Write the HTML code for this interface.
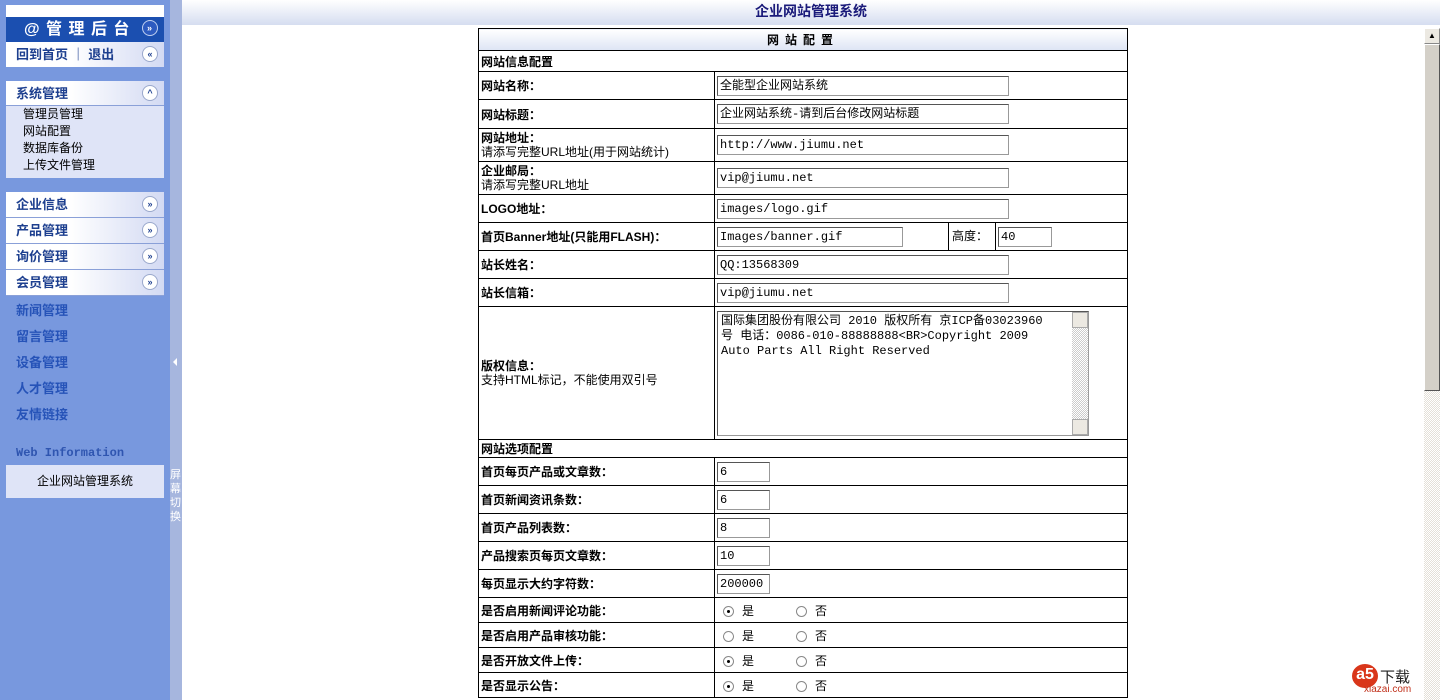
<!DOCTYPE html>
<html><head><meta charset="utf-8"><style>
*{margin:0;padding:0;box-sizing:border-box}
html{overflow:hidden;width:1440px;height:700px}
body{width:1440px;height:700px;overflow:hidden;background:#fff;font-family:"Liberation Sans","Noto Sans CJK SC","WenQuanYi Zen Hei",sans-serif;font-size:12px;position:relative}
.side{position:absolute;left:0;top:0;width:170px;height:700px;background:#7898de}
.strip{position:absolute;left:170px;top:0;width:12px;height:700px;background:#a6b6de}
.abs{position:absolute}
.box{position:absolute;left:6px;width:158px}
.hd{height:25px;background:linear-gradient(90deg,#fff 40%,#d3daf3);color:#1d3f8f;font-weight:bold;font-size:13px;line-height:25px;padding-left:10px;border-bottom:1px solid #8aa0d8}
.ic{position:absolute;right:6px;top:4px;width:16px;height:16px;border-radius:50%;background:#fff;border:1px solid #9aa8cc;color:#1d3f8f;font-size:9px;line-height:14px;text-align:center;font-weight:bold}
.lk{position:absolute;left:16px;color:#2653b8;font-weight:bold;font-size:13px}
.top{position:absolute;left:182px;top:0;width:1258px;height:25px;background:linear-gradient(#fff,#d5ddf0);text-align:center;color:#1a1a7a;font-weight:bold;font-size:14px;line-height:23px}
table{position:absolute;left:478px;top:28px;width:650px;border-collapse:collapse}
td{border:1px solid #000;padding:0 2px;font-size:12px;vertical-align:middle}
td.l{width:236px;font-weight:bold}
td.l span{font-weight:normal}
.in{display:inline-block;border:1px solid #999;border-top-color:#555;border-left-color:#555;height:20px;line-height:18px;padding-left:2px;font-family:"Liberation Mono","Noto Sans CJK SC",monospace;font-size:12px;vertical-align:middle}
.r{display:inline-block;width:11px;height:11px;border-radius:50%;border:1px solid #888;background:#fff;vertical-align:middle;position:relative;margin:0 8px 0 6px}
.r.on::after{content:"";position:absolute;left:3px;top:3px;width:3px;height:3px;border-radius:50%;background:#000}
.sp{display:inline-block;width:36px}
.sb{position:absolute;left:1424px;top:28px;width:16px;height:672px;background:repeating-conic-gradient(#e4e0d8 0 25%,#fff 0 50%) 0 0/2px 2px}
</style></head><body>
<div class="side"></div>
<div class="strip"><div class="abs" style="left:3px;top:358px;width:0;height:0;border:4px solid transparent;border-right-color:#fff;border-left:0"></div>
<div class="abs" style="left:0;top:468px;width:12px;color:#fff;font-size:11px;line-height:14px">屏幕切换</div></div>
<div class="abs" style="left:6px;top:5px;width:158px;height:12px;background:#fff"></div>
<div class="abs" style="left:6px;top:17px;width:158px;height:25px;background:#1b4fb0;color:#fff;font-weight:bold;font-size:16px;line-height:25px;padding-left:18px;letter-spacing:1px">@ 管 理 后 台<div class="ic" style="top:3px;background:#2d5bc0;border-color:#c0d0f0;color:#fff">»</div></div>
<div class="abs" style="left:6px;top:42px;width:158px;height:25px;background:linear-gradient(90deg,#fff 40%,#d3daf3);color:#1d3f8f;font-weight:bold;font-size:13px;line-height:25px;padding-left:10px">回到首页 ｜ 退出<div class="ic">«</div></div>
<div class="box" style="top:81px;height:97px;background:#dfe4f7"><div class="hd">系统管理<div class="ic">^</div></div>
<div style="padding-left:17px;line-height:17px;font-size:12px;color:#000">管理员管理<br>网站配置<br>数据库备份<br>上传文件管理</div></div>
<div class="box hd" style="top:192px;height:26px">企业信息<div class="ic">»</div></div>
<div class="box hd" style="top:218px;height:26px">产品管理<div class="ic">»</div></div>
<div class="box hd" style="top:244px;height:26px">询价管理<div class="ic">»</div></div>
<div class="box hd" style="top:270px;height:26px">会员管理<div class="ic">»</div></div>
<div class="lk" style="top:300px">新闻管理</div>
<div class="lk" style="top:326px">留言管理</div>
<div class="lk" style="top:352px">设备管理</div>
<div class="lk" style="top:378px">人才管理</div>
<div class="lk" style="top:404px">友情链接</div>
<div class="lk" style="top:446px;font-family:'Liberation Mono',monospace;font-size:12px;color:#2f55b0">Web Information</div>
<div class="abs" style="left:6px;top:465px;width:158px;height:33px;background:#dfe4f7;text-align:center;line-height:33px;font-size:12px">企业网站管理系统</div>
<div class="top">企业网站管理系统</div>
<table>
<tr style="height:22px"><td colspan="2" style="text-align:center;font-weight:bold;letter-spacing:6px;background:linear-gradient(#fff,#dde4f4)">网站配置</td></tr>
<tr style="height:21px"><td colspan="2" style="font-weight:bold">网站信息配置</td></tr>
<tr style="height:28px"><td class="l">网站名称：</td><td><span class="in" style="width:292px">全能型企业网站系统</span></td></tr>
<tr style="height:29px"><td class="l">网站标题：</td><td><span class="in" style="width:292px">企业网站系统-请到后台修改网站标题</span></td></tr>
<tr style="height:33px"><td class="l" style="line-height:14px">网站地址：<br><span>请添写完整URL地址(用于网站统计)</span></td><td><span class="in" style="width:292px">http://www.jiumu.net</span></td></tr>
<tr style="height:33px"><td class="l" style="line-height:14px">企业邮局：<br><span>请添写完整URL地址</span></td><td><span class="in" style="width:292px">vip@jiumu.net</span></td></tr>
<tr style="height:28px"><td class="l">LOGO地址：</td><td><span class="in" style="width:292px">images/logo.gif</span></td></tr>
<tr style="height:28px"><td class="l">首页Banner地址(只能用FLASH)：</td><td style="padding:0"><div style="display:flex;height:27px;align-items:center"><div style="width:233px;padding-left:2px"><span class="in" style="width:186px">Images/banner.gif</span></div><div style="width:48px;border-left:1px solid #000;border-right:1px solid #000;height:27px;line-height:26px;padding-left:3px">高度：</div><div style="padding-left:2px"><span class="in" style="width:54px">40</span></div></div></td></tr>
<tr style="height:28px"><td class="l">站长姓名：</td><td><span class="in" style="width:292px">QQ:13568309</span></td></tr>
<tr style="height:28px"><td class="l">站长信箱：</td><td><span class="in" style="width:292px">vip@jiumu.net</span></td></tr>
<tr style="height:133px"><td class="l" style="line-height:14px">版权信息：<br><span>支持HTML标记，不能使用双引号</span></td><td><div class="in" style="width:372px;height:125px;line-height:15px;padding:2px 18px 0 3px;position:relative;white-space:pre;overflow:hidden">国际集团股份有限公司 2010 版权所有 京ICP备03023960
号 电话：0086-010-88888888&lt;BR&gt;Copyright 2009
Auto Parts All Right Reserved<div style="position:absolute;right:0;top:0;width:16px;height:123px;background:repeating-conic-gradient(#ccc 0 25%,#fff 0 50%) 0 0/2px 2px"><div style="height:16px;background:#ece9e2;border:1px solid #aaa"></div><div style="position:absolute;bottom:0;width:16px;height:16px;background:#ece9e2;border:1px solid #aaa"></div></div></div></td></tr>
<tr style="height:18px"><td colspan="2" style="font-weight:bold">网站选项配置</td></tr>
<tr style="height:28px"><td class="l">首页每页产品或文章数：</td><td><span class="in" style="width:53px">6</span></td></tr>
<tr style="height:28px"><td class="l">首页新闻资讯条数：</td><td><span class="in" style="width:53px">6</span></td></tr>
<tr style="height:28px"><td class="l">首页产品列表数：</td><td><span class="in" style="width:53px">8</span></td></tr>
<tr style="height:28px"><td class="l">产品搜索页每页文章数：</td><td><span class="in" style="width:53px">10</span></td></tr>
<tr style="height:28px"><td class="l">每页显示大约字符数：</td><td><span class="in" style="width:53px">200000</span></td></tr>
<tr style="height:25px"><td class="l">是否启用新闻评论功能：</td><td><span class="r on"></span>是<span class="sp"></span><span class="r"></span>否</td></tr>
<tr style="height:25px"><td class="l">是否启用产品审核功能：</td><td><span class="r"></span>是<span class="sp"></span><span class="r"></span>否</td></tr>
<tr style="height:25px"><td class="l">是否开放文件上传：</td><td><span class="r on"></span>是<span class="sp"></span><span class="r"></span>否</td></tr>
<tr style="height:25px"><td class="l">是否显示公告：</td><td><span class="r on"></span>是<span class="sp"></span><span class="r"></span>否</td></tr>
</table>
<div class="sb"><div style="height:16px;background:#ece9e2;border:1px solid #888;border-top-color:#fff;border-left-color:#fff;text-align:center;font-size:8px;line-height:13px">▲</div><div style="height:347px;background:#d4d0c8;border:1px solid #555;border-top-color:#fff;border-left-color:#fff"></div></div>
<div class="abs" style="left:1352px;top:664px;width:72px;height:30px"><div class="abs" style="left:0;top:0;width:26px;height:24px;border-radius:50%;background:#d9361a;color:#fff;font-weight:bold;font-size:16px;text-align:center;line-height:22px">a5</div><div class="abs" style="left:28px;top:2px;font-size:15px;color:#222">下载</div><div class="abs" style="left:12px;top:20px;font-size:10px;color:#c0301a">xiazai.com</div></div>
</body></html>
